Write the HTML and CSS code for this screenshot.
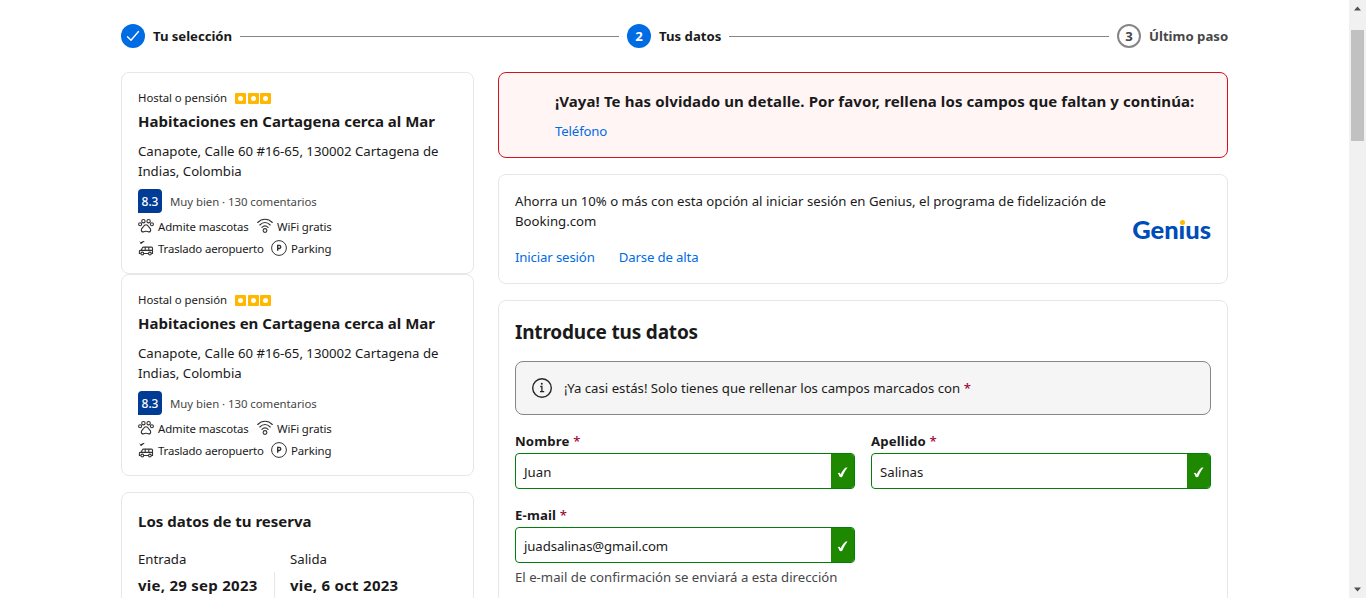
FILE: index.html
```html
<!DOCTYPE html>
<html lang="es">
<head>
<meta charset="utf-8">
<title>Tus datos</title>
<link rel="stylesheet" href="styles.css">
</head>
<body>
<svg class="defs" width="0" height="0">
  <symbol id="square" viewBox="0 0 11 11"><rect width="11" height="11" rx="1" fill="#ffb700"/><circle cx="5.5" cy="5.5" r="2.5" fill="#fff"/></symbol>
  <symbol id="paw" viewBox="0 0 16 16"><g fill="none" stroke="#333" stroke-width="1.1"><circle cx="5.4" cy="3.2" r="1.7"/><circle cx="10.6" cy="3.2" r="1.7"/><circle cx="2.1" cy="6.2" r="1.5"/><circle cx="13.9" cy="6.2" r="1.5"/><path d="M8 6.7c-1.4 0-2 .9-2.5 1.9-.5.9-2.2 1.6-2.2 3.3 0 1.3 1 2 2.1 2 1 0 1.6-.6 2.6-.6s1.6.6 2.6.6c1.1 0 2.1-.7 2.1-2 0-1.7-1.7-2.4-2.2-3.3-.5-1-1.1-1.9-2.5-1.9z"/></g></symbol>
  <symbol id="wifi" viewBox="0 0 16 16"><g fill="none" stroke="#333" stroke-width="1.1" stroke-linecap="round"><path d="M.7 4.5C4.8.2 11.2.2 15.3 4.5M2.8 7C6 3.6 10 3.6 13.2 7M4.9 9.4c1.9-2 4.3-2 6.2 0"/><circle cx="8" cy="12.5" r="1.9"/></g></symbol>
  <symbol id="shuttle" viewBox="0 0 16 16"><g fill="none" stroke="#333" stroke-width="1.1"><path d="M2.7 13.5H1.4v-2.200c0-.5.3-.8.8-.9l1-.2 1.200-2.400c.3-.5.6-.7 1.100-.7H13.500c.6 0 1 .4 1 1v5.400h-1.200M5.800 13.500h4.600M3 10.400h11.500M7.200 7.100v3.300M10.800 7.100v3.300"/><circle cx="4.300" cy="13.500" r="1.400"/><circle cx="11.900" cy="13.500" r="1.400"/></g><path d="M1 1.200l1.700 1L5.400 1l1.400.1-3.300 2.700H2l.5-.8z" fill="#222"/></symbol>
  <symbol id="parking" viewBox="0 0 16 16"><g fill="none" stroke="#333"><circle cx="8" cy="8" r="7.4" stroke-width="1"/><path d="M6.7 10.8V5.4h1.5a1.5 1.5 0 0 1 0 3.1H6.7" stroke-width="1.4"/></g></symbol>
  <symbol id="tick" viewBox="0 0 12 12"><path d="M.8 7.2C1.7 6 3 6 3.4 7.1L3.9 8.2C5.4 5.1 7 2.500 8.800 1c.7-.5 1.900-.6 2.700-.5C9.300 3.200 7.600 6.500 6 10c-.5 1.200-2.700 1.500-3.300.3C2.100 9 1.800 7.500.8 7.200z" fill="#fff"/></symbol>
</svg>
<div class="page">
  <main class="content">
    <nav class="steps">
      <div class="step"><span class="bullet on"><svg width="24" height="24" viewBox="0 0 24 24"><path d="M6.500 12.700l3.500 3.500L17.500 7.500" fill="none" stroke="#fff" stroke-width="1.400" stroke-linecap="round" stroke-linejoin="round"/></svg></span><span class="label s1">Tu selección</span></div>
      <div class="rule done"></div>
      <div class="step"><span class="bullet on">2</span><span class="label s2">Tus datos</span></div>
      <div class="rule"></div>
      <div class="step"><span class="bullet off">3</span><span class="label s3">Último paso</span></div>
    </nav>
    <div class="columns">
      <aside class="side">
        <section class="card hotel">
          <div class="kind"><span>Hostal o pensión</span><span class="squares"><svg><use href="#square"/></svg><svg><use href="#square"/></svg><svg><use href="#square"/></svg></span></div>
          <h2 class="name">Habitaciones en Cartagena cerca al Mar</h2>
          <p class="address">Canapote, Calle 60 #16-65, 130002 Cartagena de<br>Indias, Colombia</p>
          <div class="review"><span class="score">8.3</span><span class="words">Muy bien · 130 comentarios</span></div>
          <div class="perks"><svg><use href="#paw"/></svg><span class="w1">Admite mascotas</span><svg><use href="#wifi"/></svg><span>WiFi gratis</span></div>
          <div class="perks"><svg><use href="#shuttle"/></svg><span class="w2">Traslado aeropuerto</span><svg><use href="#parking"/></svg><span>Parking</span></div>
        </section>
        <section class="card hotel">
          <div class="kind"><span>Hostal o pensión</span><span class="squares"><svg><use href="#square"/></svg><svg><use href="#square"/></svg><svg><use href="#square"/></svg></span></div>
          <h2 class="name">Habitaciones en Cartagena cerca al Mar</h2>
          <p class="address">Canapote, Calle 60 #16-65, 130002 Cartagena de<br>Indias, Colombia</p>
          <div class="review"><span class="score">8.3</span><span class="words">Muy bien · 130 comentarios</span></div>
          <div class="perks"><svg><use href="#paw"/></svg><span class="w1">Admite mascotas</span><svg><use href="#wifi"/></svg><span>WiFi gratis</span></div>
          <div class="perks"><svg><use href="#shuttle"/></svg><span class="w2">Traslado aeropuerto</span><svg><use href="#parking"/></svg><span>Parking</span></div>
        </section>
        <section class="card booking">
          <h2 class="name">Los datos de tu reserva</h2>
          <div class="dates">
            <div class="date first"><span class="when">Entrada</span><strong>vie, 29 sep 2023</strong></div>
            <div class="date"><span class="when">Salida</span><strong>vie, 6 oct 2023</strong></div>
          </div>
        </section>
      </aside>
      <div class="main">
        <section class="card alert">
          <h2 class="alert-title">¡Vaya! Te has olvidado un detalle. Por favor, rellena los campos que faltan y continúa:</h2>
          <a class="link">Teléfono</a>
        </section>
        <section class="card genius">
          <div>
            <p class="pitch">Ahorra un 10% o más con esta opción al iniciar sesión en Genius, el programa de fidelización de<br>Booking.com</p>
            <div class="links"><a class="link">Iniciar sesión</a><a class="link">Darse de alta</a></div>
          </div>
          <div class="logo">Gen<span class="i">ı</span>us</div>
        </section>
        <section class="card form">
          <h1 class="heading">Introduce tus datos</h1>
          <div class="info"><svg width="20" height="20" viewBox="0 0 20 20" fill="none" stroke="#262626"><circle cx="10" cy="10" r="9.300" stroke-width="1.400"/><path d="M8.300 8.500h1.600v4.700M8 13.700h4.200" stroke-width="1.300"/><circle cx="9.800" cy="5.800" r="1" fill="#262626" stroke="none"/></svg><span>¡Ya casi estás! Solo tienes que rellenar los campos marcados con <b class="req">*</b></span></div>
          <div class="fields">
            <div class="field"><label>Nombre <b class="req">*</b></label><div class="input"><span>Juan</span><i><svg><use href="#tick"/></svg></i></div></div>
            <div class="field"><label>Apellido <b class="req">*</b></label><div class="input"><span>Salinas</span><i><svg><use href="#tick"/></svg></i></div></div>
            <div class="field"><label>E-mail <b class="req">*</b></label><div class="input"><span class="mail">juadsalinas@gmail.com</span><i><svg><use href="#tick"/></svg></i></div><p class="help">El e-mail de confirmación se enviará a esta dirección</p></div>
          </div>
        </section>
      </div>
    </div>
  </main>
  <div class="scrollbar">
    <svg class="arrow" width="17" height="17"><path d="M5 10.500h7L8.500 6.500z" fill="#505050"/></svg>
    <div class="track"><div class="thumb"></div></div>
    <svg class="arrow" width="17" height="17"><path d="M5 6.500h7L8.500 10.500z" fill="#505050"/></svg>
  </div>
</div>
</body>
</html>
```

FILE: styles.css
```css
* { box-sizing: border-box; margin: 0; padding: 0; }
body { height: 598px; overflow: hidden; background: #fff; color: #1a1a1a; font-family: "Noto Sans", "Open Sans", sans-serif; font-size: 13.2px; line-height: 20px; white-space: nowrap; }
.defs { display: block; }
.page { display: flex; height: 598px; overflow: hidden; }
.content { flex: 1; padding: 24px 121px 0; }
.steps { display: flex; align-items: center; height: 24px; width: 1107px; gap: 8px; }
.step { display: flex; align-items: center; gap: 8px; }
.bullet { display: flex; align-items: center; justify-content: center; width: 24px; height: 24px; border-radius: 50%; font-weight: 700; }
.on { background: #006ce4; color: #fff; }
.off { border: 2px solid #868686; color: #474747; }
.label { font-weight: 700; }
.s1 { width: 79px; letter-spacing: -.05px; }
.s2 { width: 62px; }
.s3 { width: 79px; color: #474747; }
.rule { flex: 1; height: 1px; background: #868686; }
.rule.done { flex: 0 0 379px; }
.columns { display: flex; gap: 24px; margin-top: 24px; width: 1107px; }
.side { width: 353px; }
.main { width: 730px; display: flex; flex-direction: column; gap: 16px; }
.card { border: 1px solid #e7e7e7; border-radius: 8px; padding: 16px; }
.hotel { height: 202px; padding-top: 15px; }
.kind { display: flex; align-items: center; height: 20px; gap: 8px; font-size: 11.4px; letter-spacing: -.05px; }
.squares { display: flex; gap: 1.5px; }
.squares svg { width: 11px; height: 11px; }
.name { font-size: 15px; line-height: 24px; font-weight: 700; }
.kind + .name { margin-top: 1px; }
.address { margin-top: 8px; }
.review { display: flex; align-items: center; gap: 8px; height: 24px; margin-top: 8px; font-size: 11.4px; color: #474747; letter-spacing: -.05px; }
.words { padding-top: 2px; }
.score { display: flex; align-items: center; justify-content: center; width: 24px; height: 24px; padding-top: 1px; border-radius: 4px 4px 4px 0; background: #003b95; color: #fff; font-size: 12px; font-weight: 500; }
.perks { display: flex; align-items: center; height: 22px; gap: 4px; font-size: 11.4px; letter-spacing: -.1px; }
.perks span { padding-top: 2px; }
.review + .perks { margin-top: 2px; }
.perks svg { width: 16px; height: 16px; flex: none; }
.w1 { width: 95px; }
.w2 { width: 109px; letter-spacing: -.15px; }
.booking { margin-top: 16px; height: 300px; }
.dates { display: flex; margin-top: 16px; }
.date { display: flex; flex-direction: column; }
.date strong { font-size: 15px; line-height: 24px; padding-top: 4px; letter-spacing: .26px; }
.date.first { width: 137px; margin-right: 15px; }
.date.first strong { height: 60px; margin-top: 3px; padding-top: 1px; border-right: 1px solid #e7e7e7; }
.alert { height: 86px; padding-left: 56px; border-color: #d4111e; background: #fff5f5; }
.alert-title { font-size: 15px; line-height: 24px; letter-spacing: .095px; }
.link { display: block; color: #006ce4; letter-spacing: -.14px; }
.alert .link { margin-top: 8px; }
.genius { display: flex; justify-content: space-between; align-items: center; height: 110px; }
.links { display: flex; gap: 24px; margin-top: 16px; }
.logo { padding-bottom: 1px; font-family: Lato, sans-serif; font-weight: 900; font-size: 25.5px; color: #004cb8; }
.i { position: relative; }
.i::after { content: ""; position: absolute; left: 1px; top: 6px; width: 5px; height: 5px; border-radius: 50%; background: #ffb700; }
.form { height: 400px; }
.heading { font-size: 19px; line-height: 28px; padding-top: 1px; letter-spacing: -.19px; }
.info { display: flex; align-items: center; gap: 12px; height: 54px; margin-top: 15px; padding-left: 16px; border: 1px solid #868686; border-radius: 8px; background: #f5f5f5; }
.req { color: #a30234; font-weight: 500; }
.fields { display: grid; grid-template-columns: 340px 340px; gap: 16px; margin-top: 16px; }
.field label { display: block; height: 22px; line-height: 20px; font-weight: 700; letter-spacing: .15px; }
.input { display: flex; justify-content: space-between; height: 36px; border: 1px solid #008009; border-radius: 4px; overflow: hidden; padding-left: 8px; line-height: 36px; }
.mail { letter-spacing: -.1px; }
.input i { display: flex; align-items: center; justify-content: center; width: 23px; padding: 2px 1px 0 0; background: #1e8900; }
.input i svg { width: 11px; height: 11px; }
.help { margin-top: 4px; color: #474747; }
.scrollbar { display: flex; flex-direction: column; width: 17px; background: #f1f1f1; }
.arrow { display: block; }
.track { flex: 1; padding: 13px 2px 0; }
.thumb { height: 111px; background: #c1c1c1; }
```
